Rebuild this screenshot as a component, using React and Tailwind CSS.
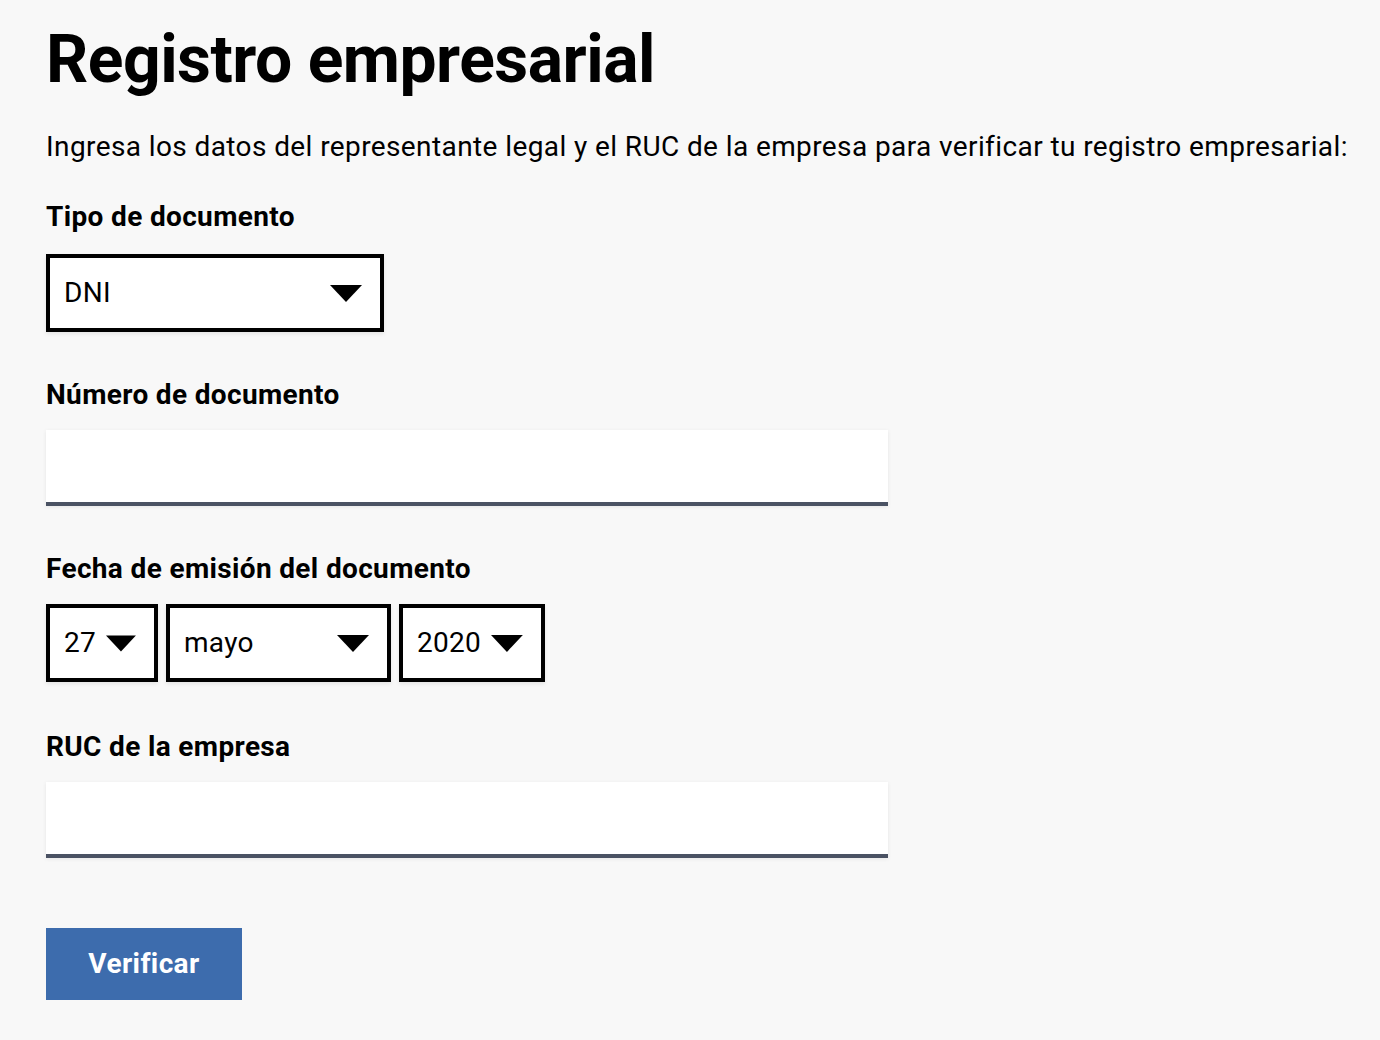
import React from "react";

const Tri = ({ className = "" }) => (
  <svg width="32" height="17" viewBox="0 0 32 17" className={className}>
    <polygon points="0,0 32,0 16,17" fill="#000" />
  </svg>
);

const Select = ({ value, w, gap = false }) => (
  <div
    className={`h-[78px] border-4 border-black bg-white shadow-[0_2px_4px_rgba(0,0,0,0.08)] flex items-center pl-[14px] pr-[18px] ${w} ${gap ? "gap-[10px]" : "justify-between"}`}
  >
    <span className="text-[28px] leading-none text-black tracking-[0.3px]">{value}</span>
    <Tri />
  </div>
);

const Label = ({ children, className = "" }) => (
  <div className={`text-[28px] font-bold leading-[34px] tracking-[0.35px] text-black ${className}`}>{children}</div>
);

const Input = () => (
  <div className="w-[842px] h-[76px] bg-white border-b-4 border-[#4a5263] shadow-[0_1px_4px_rgba(0,0,0,0.08)]" />
);

export default function App() {
  return (
    <div
      className="min-h-[1040px] bg-[#f8f8f8] px-[46px] pt-[22px] text-black"
      style={{ fontFamily: "Roboto, 'Liberation Sans', sans-serif" }}
    >
      <h1 className="text-[66px] font-bold leading-[76px] tracking-[-0.5px]">Registro empresarial</h1>
      <p className="mt-[32px] text-[28px] leading-[34px] tracking-[0.4px] whitespace-nowrap">
        Ingresa los datos del representante legal y el RUC de la empresa para verificar tu registro empresarial:
      </p>
      <Label className="mt-[36px]">Tipo de documento</Label>
      <div className="mt-[20px]">
        <Select value="DNI" w="w-[338px]" />
      </div>
      <Label className="mt-[46px]">Número de documento</Label>
      <div className="mt-[18px]">
        <Input />
      </div>
      <Label className="mt-[46px]">Fecha de emisión del documento</Label>
      <div className="mt-[18px] flex gap-[8px]">
        <Select value="27" w="w-[112px]" gap />
        <Select value="mayo" w="w-[225px]" />
        <Select value="2020" w="w-[146px]" gap />
      </div>
      <Label className="mt-[48px]">RUC de la empresa</Label>
      <div className="mt-[18px]">
        <Input />
      </div>
      <button className="mt-[70px] w-[196px] h-[72px] bg-[#3d6cad] text-white text-[28px] font-bold tracking-[0.4px] flex items-center justify-center">
        Verificar
      </button>
    </div>
  );
}
